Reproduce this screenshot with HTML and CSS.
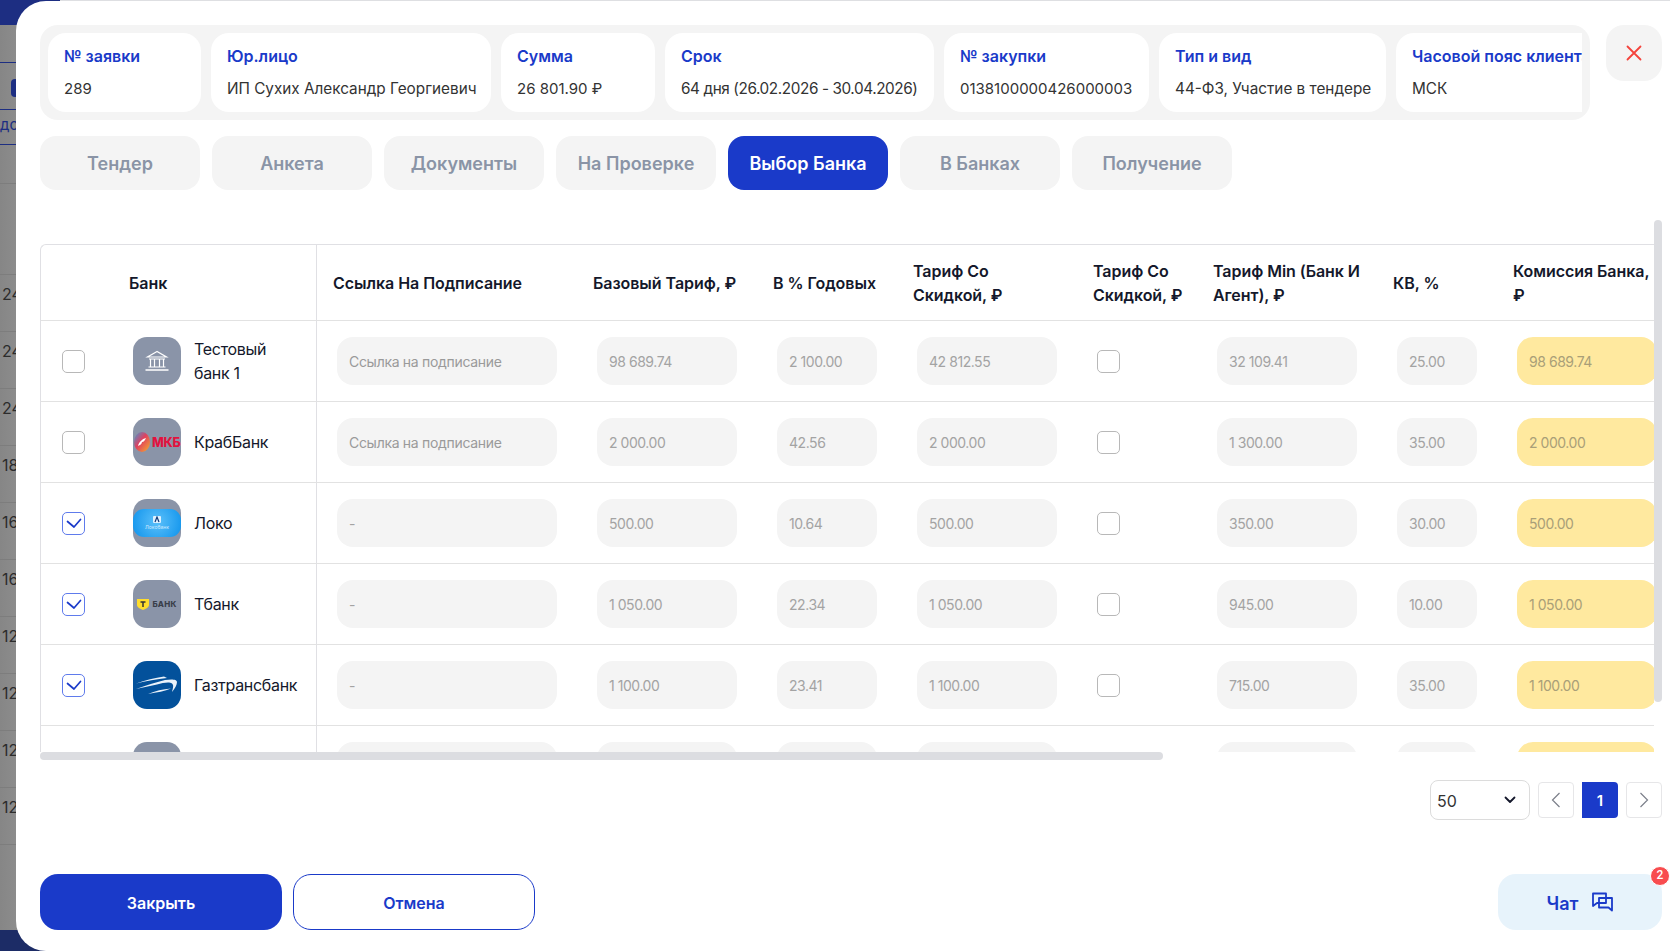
FILE: index.html
```html
<!DOCTYPE html>
<html lang="ru">
<head>
<meta charset="utf-8">
<title>Заявка 289</title>
<link rel="stylesheet" href="styles.css">
</head>
<body>
<div class="backdrop">
  <div class="bd-top"></div>
  <div class="bd-head"></div>
  <div class="bd-head bd-tall"><span class="bd-pill"></span></div>
  <div class="bd-head bd-filter">до</div>
  <div class="bd-gap"></div>
  <div class="bd-gap2"></div>
  <div class="bd-row">24</div>
  <div class="bd-row">24</div>
  <div class="bd-row">24</div>
  <div class="bd-row">18</div>
  <div class="bd-row">16</div>
  <div class="bd-row">16</div>
  <div class="bd-row">12</div>
  <div class="bd-row">12</div>
  <div class="bd-row">12</div>
  <div class="bd-row">12</div>
  <div class="bd-rest"></div>
  <div class="bd-bottom"></div>
</div>

<main class="modal">
  <header class="top">
    <div class="strip">
      <div class="strip-inner">
        <div class="card c1"><div class="lbl">№ заявки</div><div class="val">289</div></div>
        <div class="card c2"><div class="lbl">Юр.лицо</div><div class="val">ИП Сухих Александр Георгиевич</div></div>
        <div class="card c3"><div class="lbl">Сумма</div><div class="val">26 801.90 ₽</div></div>
        <div class="card c4"><div class="lbl">Срок</div><div class="val">64 дня (26.02.2026 - 30.04.2026)</div></div>
        <div class="card c5"><div class="lbl">№ закупки</div><div class="val">0138100000426000003</div></div>
        <div class="card c6"><div class="lbl">Тип и вид</div><div class="val">44-ФЗ, Участие в тендере</div></div>
        <div class="card c7"><div class="lbl">Часовой пояс клиента</div><div class="val">МСК</div></div>
      </div>
    </div>
    <button class="close" type="button" aria-label="Закрыть">
      <svg width="16" height="16" viewBox="0 0 16 16"><path d="M1.5 1.5l13 13M14.5 1.5l-13 13" fill="none" stroke="#f4433c" stroke-width="1.8" stroke-linecap="round"/></svg>
    </button>
  </header>

  <nav class="tabs">
    <div class="tab">Тендер</div>
    <div class="tab">Анкета</div>
    <div class="tab">Документы</div>
    <div class="tab">На Проверке</div>
    <div class="tab active">Выбор Банка</div>
    <div class="tab">В Банках</div>
    <div class="tab">Получение</div>
  </nav>

  <section class="grid-area">
    <div class="scroller">
      <table class="banks">
        <colgroup>
          <col class="w-bank"><col class="w-link"><col class="w-180"><col class="w-140"><col class="w-180"><col class="w-120"><col class="w-180"><col class="w-120"><col class="w-180">
        </colgroup>
        <thead>
          <tr>
            <th class="th-bank">Банк</th>
            <th>Ссылка На Подписание</th>
            <th>Базовый Тариф, ₽</th>
            <th>В % Годовых</th>
            <th>Тариф Со<br>Скидкой, ₽</th>
            <th>Тариф Со<br>Скидкой, ₽</th>
            <th>Тариф Min (Банк И<br>Агент), ₽</th>
            <th>КВ, %</th>
            <th>Комиссия Банка,<br>₽</th>
          </tr>
        </thead>
        <tbody>
          <tr>
            <td class="td-bank"><div class="bank">
              <span class="cb"></span>
              <span class="logo"><svg width="26" height="24" viewBox="0 0 26 24" fill="none" stroke="#fff" stroke-width="1.2"><path d="M13 2.5L3.5 8h19z"/><path d="M5 10h16M6.5 10.5v7M10.5 10.5v7M15.5 10.5v7M19.5 10.5v7M4.5 18h17"/><path d="M1.5 21h23" stroke-width="1.4"/></svg></span>
              <span class="name">Тестовый банк 1</span>
            </div></td>
            <td><div class="field ph">Ссылка на подписание</div></td>
            <td><div class="field">98 689.74</div></td>
            <td><div class="field">2 100.00</div></td>
            <td><div class="field">42 812.55</div></td>
            <td><span class="cb"></span></td>
            <td><div class="field">32 109.41</div></td>
            <td><div class="field">25.00</div></td>
            <td><div class="field gold">98 689.74</div></td>
          </tr>
          <tr>
            <td class="td-bank"><div class="bank">
              <span class="cb"></span>
              <span class="logo logo-mkb"><svg class="mkb-mark" width="16" height="20" viewBox="0 0 16 20"><defs><linearGradient id="mkb" x1="0" y1="0" x2="1" y2="1"><stop offset="0" stop-color="#3f9ad8"/><stop offset=".45" stop-color="#e0405f"/><stop offset="1" stop-color="#f7b02a"/></linearGradient></defs><ellipse cx="8" cy="10" rx="8" ry="10" fill="url(#mkb)"/><path d="M4 14c1-4 4-7 8-8-1 2-2 4-4 4 0 2-2 3-4 4z" fill="#fff"/></svg><span class="mkb-text">МКБ</span></span>
              <span class="name">КрабБанк</span>
            </div></td>
            <td><div class="field ph">Ссылка на подписание</div></td>
            <td><div class="field">2 000.00</div></td>
            <td><div class="field">42.56</div></td>
            <td><div class="field">2 000.00</div></td>
            <td><span class="cb"></span></td>
            <td><div class="field">1 300.00</div></td>
            <td><div class="field">35.00</div></td>
            <td><div class="field gold">2 000.00</div></td>
          </tr>
          <tr>
            <td class="td-bank"><div class="bank">
              <span class="cb on"><svg width="16" height="12" viewBox="0 0 16 12"><path d="M1.5 4.5L8 10l6.5-7.5" fill="none" stroke="#1a3ac9" stroke-width="1.7" stroke-linecap="round" stroke-linejoin="round"/></svg></span>
              <span class="logo"><span class="loko"><svg width="8" height="7" viewBox="0 0 8 7"><rect width="8" height="7" rx="1" fill="#dff1ff"/><path d="M2 6l2-5 2 5" fill="none" stroke="#123b7a" stroke-width="1.2"/></svg><span class="loko-text">Локобанк</span></span></span>
              <span class="name">Локо</span>
            </div></td>
            <td><div class="field">-</div></td>
            <td><div class="field">500.00</div></td>
            <td><div class="field">10.64</div></td>
            <td><div class="field">500.00</div></td>
            <td><span class="cb"></span></td>
            <td><div class="field">350.00</div></td>
            <td><div class="field">30.00</div></td>
            <td><div class="field gold">500.00</div></td>
          </tr>
          <tr>
            <td class="td-bank"><div class="bank">
              <span class="cb on"><svg width="16" height="12" viewBox="0 0 16 12"><path d="M1.5 4.5L8 10l6.5-7.5" fill="none" stroke="#1a3ac9" stroke-width="1.7" stroke-linecap="round" stroke-linejoin="round"/></svg></span>
              <span class="logo logo-t"><svg width="12" height="11" viewBox="0 0 12 11"><path d="M0 0h12v6c0 2-3 4-6 5-3-1-6-3-6-5z" fill="#ffdd2d"/><path d="M3.5 3h5M6 3v5" stroke="#333" stroke-width="1.5"/></svg><span class="t-text">БАНК</span></span>
              <span class="name">Тбанк</span>
            </div></td>
            <td><div class="field">-</div></td>
            <td><div class="field">1 050.00</div></td>
            <td><div class="field">22.34</div></td>
            <td><div class="field">1 050.00</div></td>
            <td><span class="cb"></span></td>
            <td><div class="field">945.00</div></td>
            <td><div class="field">10.00</div></td>
            <td><div class="field gold">1 050.00</div></td>
          </tr>
          <tr>
            <td class="td-bank"><div class="bank">
              <span class="cb on"><svg width="16" height="12" viewBox="0 0 16 12"><path d="M1.5 4.5L8 10l6.5-7.5" fill="none" stroke="#1a3ac9" stroke-width="1.7" stroke-linecap="round" stroke-linejoin="round"/></svg></span>
              <span class="logo logo-gaz"><svg width="48" height="48" viewBox="0 0 48 48" fill="#eaf2fa"><path d="M3 22.500C12 19 22 17 31 15.500L34 17C24 18 13 20 3 22.500z"/><path d="M3 28C14 24 24 21 32 19C38 18 44 18 44 21C44 24 42 27 39 31C40 27 41 24 39 22.500C36 20.500 30 22 24 23.500C17 25 10 26.500 3 28z"/><path d="M15 33C22 30 30 28 38 27.500C32 30 24 31.500 15 33z"/></svg></span>
              <span class="name">Газтрансбанк</span>
            </div></td>
            <td><div class="field">-</div></td>
            <td><div class="field">1 100.00</div></td>
            <td><div class="field">23.41</div></td>
            <td><div class="field">1 100.00</div></td>
            <td><span class="cb"></span></td>
            <td><div class="field">715.00</div></td>
            <td><div class="field">35.00</div></td>
            <td><div class="field gold">1 100.00</div></td>
          </tr>
          <tr>
            <td class="td-bank"><div class="bank"><span class="cb"></span><span class="logo"></span><span class="name"></span></div></td>
            <td><div class="field"></div></td>
            <td><div class="field"></div></td>
            <td><div class="field"></div></td>
            <td><div class="field"></div></td>
            <td><span class="cb"></span></td>
            <td><div class="field"></div></td>
            <td><div class="field"></div></td>
            <td><div class="field gold"></div></td>
          </tr>
        </tbody>
      </table>
    </div>
    <div class="vbar"></div>
  </section>
  <div class="hbar"></div>

  <div class="pager">
    <div class="select"><span>50</span><svg width="12" height="8" viewBox="0 0 12 8"><path d="M1.500 1.500L6 6l4.500-4.500" fill="none" stroke="#14182b" stroke-width="1.800" stroke-linecap="round" stroke-linejoin="round"/></svg></div>
    <div class="pg"><svg width="10" height="16" viewBox="0 0 10 16"><path d="M8.500 1L1.500 8l7 7" fill="none" stroke="#7b7f8a" stroke-width="1.200"/></svg></div>
    <div class="pg cur">1</div>
    <div class="pg"><svg width="10" height="16" viewBox="0 0 10 16"><path d="M1.500 1l7 7-7 7" fill="none" stroke="#7b7f8a" stroke-width="1.200"/></svg></div>
  </div>

  <footer class="foot">
    <div class="foot-left">
      <button class="btn primary" type="button">Закрыть</button>
      <button class="btn ghost" type="button">Отмена</button>
    </div>
    <button class="chat" type="button">
      <span>Чат</span>
      <svg width="21" height="20" viewBox="0 0 21 20" fill="none" stroke="#1a3ac9" stroke-width="1.800" stroke-linejoin="round"><path d="M1 1.500h13v9.500H5L1 14z"/><path d="M7 6h13v12.500l-3.500-3H7z"/></svg>
      <span class="badge">2</span>
    </button>
  </footer>
</main>
</body>
</html>
```
FILE: styles.css
```css
* { box-sizing: border-box; }
html, body { margin: 0; padding: 0; height: 100%; overflow: hidden; }
body { font-family: Inter, "Noto Sans", sans-serif; background: #dedfe2; color: #14182b; }

/* dimmed page behind the modal */
.backdrop { width: 60px; height: 951px; background: linear-gradient(90deg, #868686, #9c9c9c); color: #2c2c2c; font-size: 16px; overflow: hidden; }
.bd-top { height: 25px; background: #1d2e82; }
.bd-head { height: 38px; border-bottom: 1px solid #1d2e82; }
.bd-tall { height: 47px; position: relative; }
.bd-filter { height: 35px; color: #1d2e82; font-size: 15px; line-height: 30px; }
.bd-pill { position: absolute; left: 11px; top: 16px; width: 14px; height: 18px; border-radius: 4px; background: #1d2e82; }
.bd-gap { height: 39px; border-bottom: 1px solid #7d7d7d; }
.bd-gap2 { height: 91px; border-bottom: 1px solid #7d7d7d; }
.bd-row { height: 57px; padding: 9px 0 0 2px; line-height: 20px; border-bottom: 1px solid #7d7d7d; }
.bd-rest { height: 85px; }
.bd-bottom { height: 21px; background: #1c2c66; }

/* modal */
.modal { position: absolute; left: 16px; top: 1px; right: 0; bottom: 0; background: #fff; border-radius: 30px 0 0 30px; padding: 24px 8px 0 24px; display: flex; flex-direction: column; }

.top { display: flex; gap: 16px; align-items: flex-start; }
.strip { flex: 1; height: 95px; background: #f4f4f4; border-radius: 18px; padding: 8px; min-width: 0; }
.strip-inner { display: flex; gap: 10px; overflow: hidden; height: 79px; }
.card { flex: none; height: 79px; background: #fff; border-radius: 18px; padding: 11px 16px 0; white-space: nowrap; }
.c1 { width: 153px; } .c2 { width: 280px; } .c3 { width: 154px; } .c4 { width: 269px; } .c5 { width: 205px; } .c6 { width: 227px; } .c7 { width: 226px; }
.lbl { color: #1a3ac9; font-size: 16px; font-weight: 600; line-height: 24px; }
.val { margin-top: 9px; color: #333; font-size: 15.300px; line-height: 24px; }
.c4 .val { letter-spacing: -.4px; }
.c1 .val, .c3 .val, .c5 .val { font-size: 15px; }

.close { flex: none; width: 56px; height: 56px; border: 0; border-radius: 18px; background: #f4f4f4; display: flex; align-items: center; justify-content: center; padding: 0; }

.tabs { display: flex; gap: 12px; margin-top: 16px; }
.tab { width: 160px; height: 54px; border-radius: 16px; background: #f4f4f4; color: #8a94a6; font-size: 18px; font-weight: 600; display: flex; align-items: center; justify-content: center; }
.tab.active { background: #1a3ac9; color: #fff; }

.grid-area { display: flex; margin-top: 30px; height: 532px; }
.scroller { width: 1614px; height: 532px; overflow: hidden; padding-top: 24px; flex: none; }
.vbar { width: 8px; height: 482px; background: #dcdde1; border-radius: 4px; flex: none; }
.hbar { width: 1123px; height: 8px; background: #dcdde1; border-radius: 4px; }

.banks { width: 1637px; border-collapse: separate; border-spacing: 0; table-layout: fixed; border-left: 1px solid #e0e0e4; border-top: 1px solid #e0e0e4; border-top-left-radius: 6px; }
.w-bank { width: 276px; } .w-link { width: 260px; } .w-180 { width: 180px; } .w-140 { width: 140px; } .w-120 { width: 120px; }
.banks th { height: 76px; padding: 0 0 0 16px; text-align: left; font-size: 16px; font-weight: 600; letter-spacing: -.05px; line-height: 24px; color: #14182b; border-bottom: 1px solid #e2e2e2; white-space: nowrap; }
.banks th.th-bank { padding-left: 88px; border-right: 1px solid #e0e0e4; }
.banks td { height: 81px; padding: 16px 20px; border-bottom: 1px solid #e2e2e2; vertical-align: middle; }
.banks td.td-bank { padding: 16px 0 16px 21px; border-right: 1px solid #e0e0e4; }

.bank { display: flex; align-items: center; }
.bank .cb { margin-right: 48px; }
.cb { flex: none; display: flex; align-items: center; justify-content: center; width: 23px; height: 23px; border: 1.5px solid #b8b8b8; border-radius: 5px; background: #fff; }
.cb.on { border-color: #5f7bec; }
.logo { flex: none; width: 48px; height: 48px; border-radius: 14px; background: #8a94a8; margin-right: 13px; display: flex; align-items: center; justify-content: center; overflow: hidden; }
.name { width: 110px; font-size: 16px; letter-spacing: -.3px; line-height: 24px; color: #14182b; }

.logo-mkb { justify-content: flex-start; padding-left: 1px; gap: 2px; }
.mkb-mark { flex: none; }
.mkb-text { flex: none; color: #e2123e; font-size: 12.500px; font-weight: 800; letter-spacing: -.3px; white-space: nowrap; }
.loko { width: 48px; height: 28px; border-radius: 11px; background: radial-gradient(circle at 50% 45%, #5cc0fa, #0e93ec); display: flex; flex-direction: column; align-items: center; justify-content: center; gap: 1px; }
.loko-text { color: #cfeaff; font-size: 5px; line-height: 6px; white-space: nowrap; }
.logo-t { gap: 3px; }
.t-text { color: #3a3f4a; font-size: 8px; font-weight: 800; letter-spacing: .2px; }
.logo-gaz { background: #03519b; }

.field { height: 48px; border-radius: 16px; background: #f4f4f4; padding: 0 12px; font-size: 14px; letter-spacing: -.45px; line-height: 49px; color: #a3a3a3; white-space: nowrap; overflow: hidden; }
.field.gold { background: #ffe99f; color: #a99f78; }
.field.ph { color: #9a9a9a; letter-spacing: -.3px; }

.pager { display: flex; justify-content: flex-end; align-items: center; gap: 8px; margin-top: 20px; height: 40px; }
.select { width: 100px; height: 40px; border: 1.5px solid #dcdcdc; border-radius: 8px; padding: 2px 13px 0 6px; display: flex; align-items: center; justify-content: space-between; font-size: 16px; color: #333; }
.select svg { margin-top: -2px; }
.pg { width: 36px; height: 36px; border: 1.5px solid #e6e6e8; border-radius: 4px; display: flex; align-items: center; justify-content: center; background: #fff; }
.pg.cur { background: #1a3ac9; border: 0; border-radius: 0 4px 4px 0; color: #fff; font-size: 15px; font-weight: 600; }

.foot { display: flex; justify-content: space-between; align-items: flex-start; margin-top: 54px; }
.foot-left { display: flex; gap: 11px; }
.btn { width: 242px; height: 56px; border-radius: 18px; font-family: inherit; font-size: 16px; font-weight: 600; padding: 2px 0 0; }
.primary { background: #1a3ac9; border: 0; color: #fff; }
.ghost { background: #fff; border: 1.5px solid #1a3ac9; color: #1a3ac9; }
.chat { position: relative; width: 164px; height: 56px; border: 0; border-radius: 18px; background: #e7f3fb; color: #1a3ac9; font-family: inherit; font-size: 18px; font-weight: 600; display: flex; align-items: center; justify-content: center; gap: 14px; padding: 2px 0 0; }
.chat svg { margin-top: -2px; }
.badge { position: absolute; right: -8px; top: -8px; width: 20px; height: 20px; border-radius: 50%; background: #f84c4f; border: 1.5px solid #fff; color: #fff; font-family: Roboto, sans-serif; font-size: 12px; font-weight: 500; line-height: 17px; text-align: center; }
```
